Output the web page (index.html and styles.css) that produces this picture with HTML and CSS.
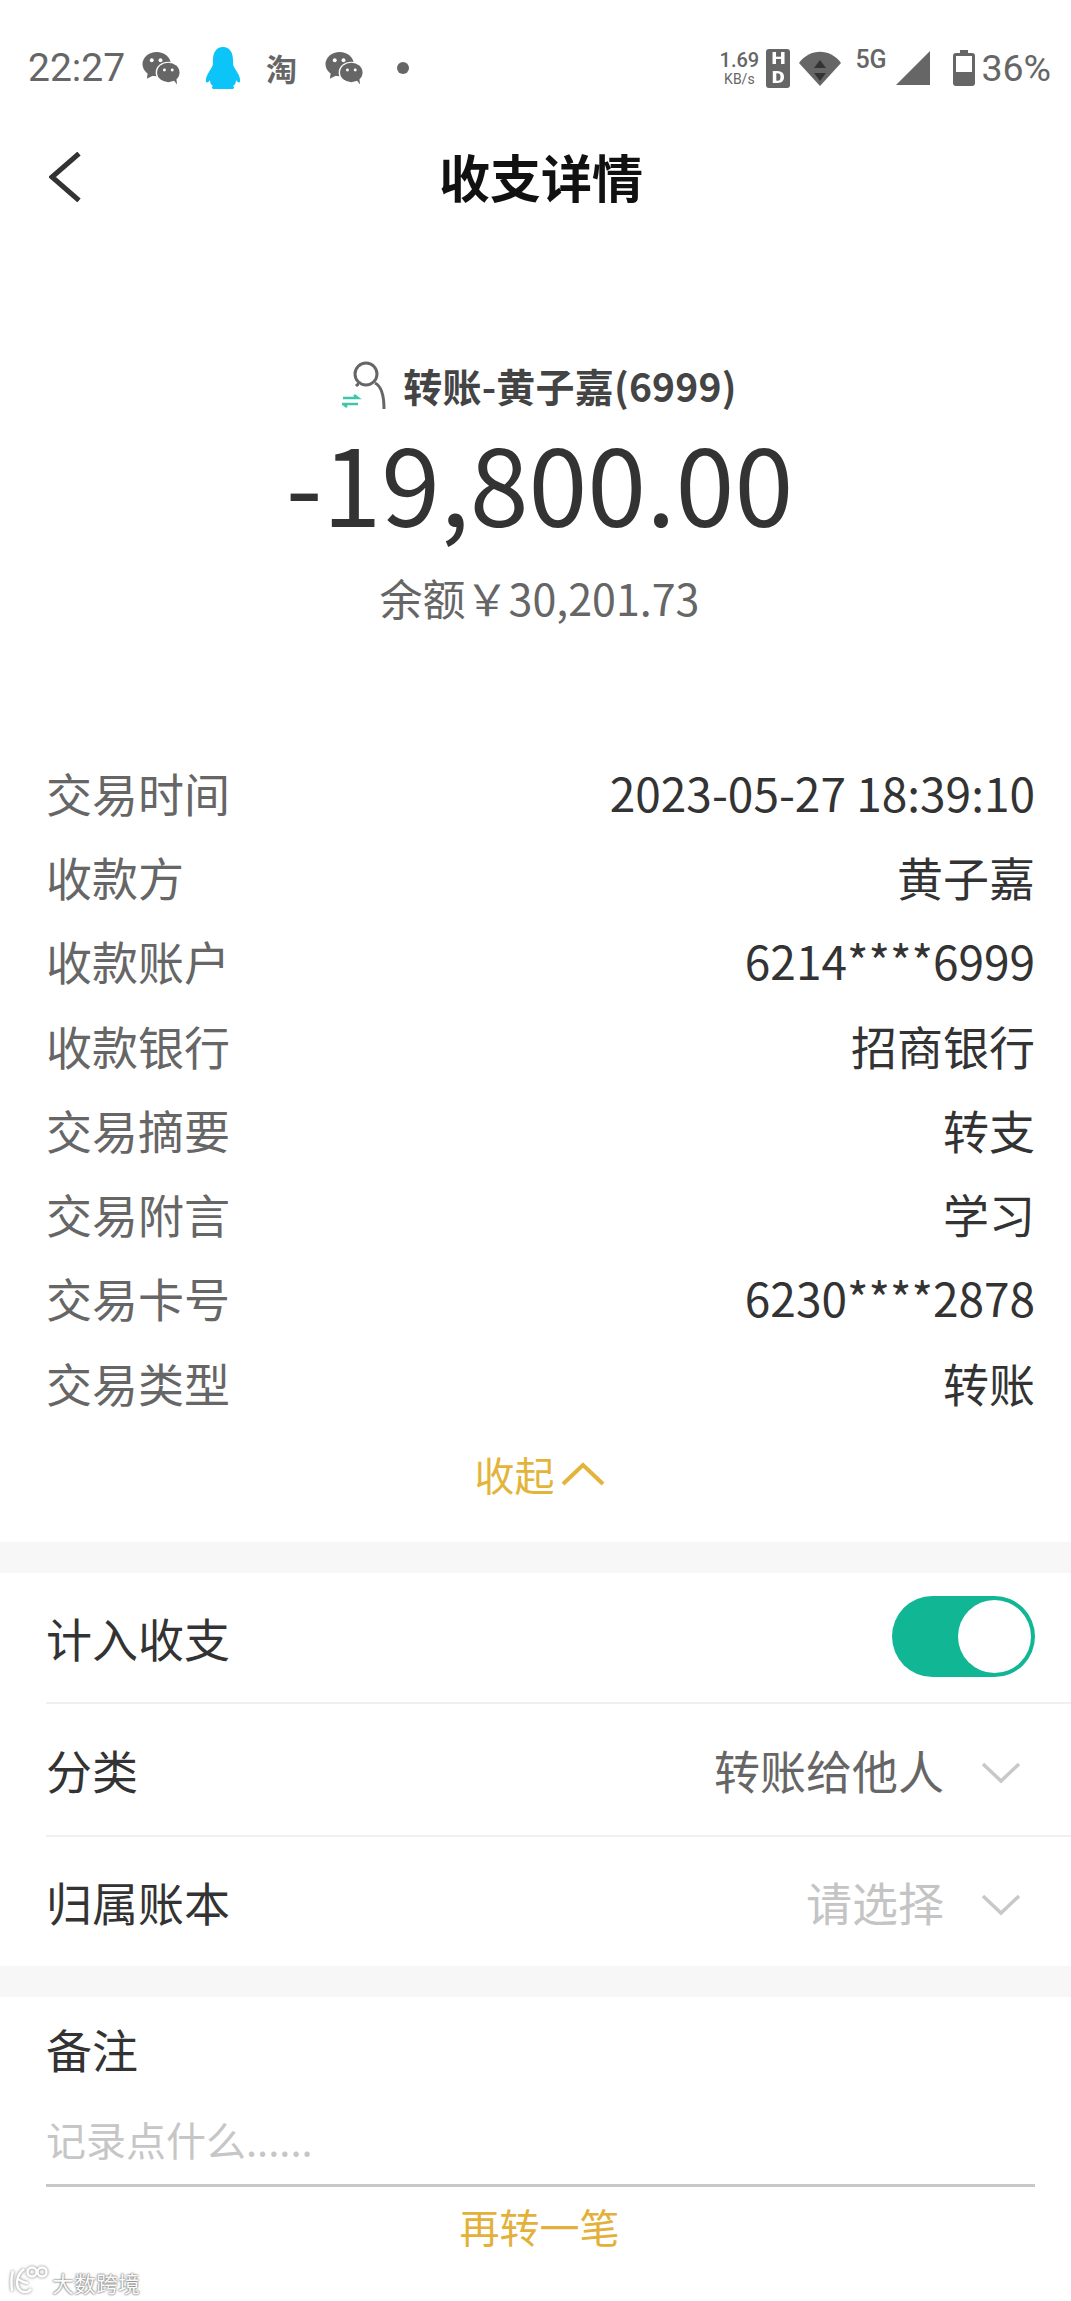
FILE: index.html
```html
<!DOCTYPE html>
<html lang="zh-CN">
<head>
<meta charset="utf-8">
<title>收支详情</title>
<link rel="stylesheet" href="styles.css">
</head>
<body>
<div class="page">
  <header class="status">
    <div class="status-left">
      <span class="clock">22:27</span>
      <svg class="ic-wechat" viewBox="0 0 40 34"><ellipse cx="15" cy="13" rx="14.5" ry="12.5" fill="#666"/><path d="M6 21l-1 7 8-4z" fill="#666"/><ellipse cx="27" cy="21.500" rx="13" ry="11" fill="#fff"/><ellipse cx="27" cy="21.500" rx="11.500" ry="10" fill="#666"/><path d="M32 29l4 5-1-8z" fill="#666"/><circle cx="10" cy="9" r="2" fill="#fff"/><circle cx="19" cy="9" r="2" fill="#fff"/><circle cx="23" cy="19" r="1.500" fill="#fff"/><circle cx="31" cy="19" r="1.500" fill="#fff"/></svg>
      <svg class="ic-qq" viewBox="0 0 36 42"><path d="M18 0c7 0 10 6 10 13 0 3 0 5 1 7 3 5 7 10 6 15-1 1-3 0-4-2 0 3-1 5-3 6 2 1 1 3-1 3H9c-2 0-3-2-1-3-2-1-3-3-3-6-1 2-3 3-4 2-1-5 3-10 6-15 1-2 1-4 1-7C8 6 11 0 18 0z" fill="#0cc4f7"/></svg>
      <span class="ic-tao">淘</span>
      <svg class="ic-wechat ic-wechat-2" viewBox="0 0 40 34"><ellipse cx="15" cy="13" rx="14.500" ry="12.500" fill="#666"/><path d="M6 21l-1 7 8-4z" fill="#666"/><ellipse cx="27" cy="21.500" rx="13" ry="11" fill="#fff"/><ellipse cx="27" cy="21.500" rx="11.500" ry="10" fill="#666"/><path d="M32 29l4 5-1-8z" fill="#666"/><circle cx="10" cy="9" r="2" fill="#fff"/><circle cx="19" cy="9" r="2" fill="#fff"/><circle cx="23" cy="19" r="1.500" fill="#fff"/><circle cx="31" cy="19" r="1.500" fill="#fff"/></svg>
      <span class="dot"></span>
    </div>
    <div class="status-right">
      <div class="speed"><span class="speed-num">1.69</span><span class="speed-unit">KB/s</span></div>
      <div class="hd"><span class="hd-letter">H</span><span class="hd-letter">D</span></div>
      <svg class="ic-wifi" viewBox="0 0 42 35"><path d="M0 12C11 -3 31 -3 42 12L21 35z" fill="#666"/><path d="M21 9l6 8H15zM21 30l-6-8h12z" fill="#333"/></svg>
      <span class="five-g">5G</span>
      <svg class="ic-signal" viewBox="0 0 34 34"><path d="M34 0v34H0z" fill="#666"/></svg>
      <svg class="ic-battery" viewBox="0 0 22 36"><path d="M7 0h8v3h4a3 3 0 0 1 3 3v27a3 3 0 0 1-3 3H3a3 3 0 0 1-3-3V6a3 3 0 0 1 3-3h4z" fill="#666"/><rect x="3" y="6" width="16" height="16" fill="#fff"/></svg>
      <span class="battery-pct">36%</span>
    </div>
  </header>

  <nav class="nav">
    <svg class="back" viewBox="0 0 32 50"><path d="M30 1.500L3 25l27 23.500" fill="none" stroke="#333" stroke-width="5"/></svg>
    <h1 class="title">收支详情</h1>
  </nav>

  <section class="summary">
    <div class="payee">
      <svg class="ic-payee" viewBox="0 0 44 50"><circle cx="24" cy="14" r="11" fill="none" stroke="#666" stroke-width="3"/><path d="M33 23c6 3 9 11 9 26" fill="none" stroke="#666" stroke-width="3"/><path d="M17 24c-1 0-2 1-3 2" fill="none" stroke="#666" stroke-width="3"/><path d="M1 38h15l-4-3M16 44H1l4 3" fill="none" stroke="#3cc7ab" stroke-width="2.500"/></svg>
      <span class="payee-name">转账-黄子嘉(6999)</span>
    </div>
    <div class="amount">-19,800.00</div>
    <div class="balance">余额￥30,201.73</div>
  </section>

  <dl class="details">
    <div class="detail"><dt>交易时间</dt><dd>2023-05-27 18:39:10</dd></div>
    <div class="detail"><dt>收款方</dt><dd>黄子嘉</dd></div>
    <div class="detail"><dt>收款账户</dt><dd>6214****6999</dd></div>
    <div class="detail"><dt>收款银行</dt><dd>招商银行</dd></div>
    <div class="detail"><dt>交易摘要</dt><dd>转支</dd></div>
    <div class="detail"><dt>交易附言</dt><dd>学习</dd></div>
    <div class="detail"><dt>交易卡号</dt><dd>6230****2878</dd></div>
    <div class="detail"><dt>交易类型</dt><dd>转账</dd></div>
  </dl>

  <div class="collapse">
    <span>收起</span>
    <svg class="ic-up" viewBox="0 0 44 24"><path d="M2 22L22 3l20 19" fill="none" stroke="#e3b43a" stroke-width="4"/></svg>
  </div>

  <div class="band"></div>

  <section class="settings">
    <div class="setting setting-toggle">
      <span class="setting-label">计入收支</span>
      <span class="toggle"><span class="knob"></span></span>
    </div>
    <div class="setting setting-mid">
      <span class="setting-label">分类</span>
      <span class="setting-value">转账给他人</span>
      <svg class="ic-down" viewBox="0 0 40 22"><path d="M2 2l18 17L38 2" fill="none" stroke="#c8c8c8" stroke-width="3.500"/></svg>
    </div>
    <div class="setting setting-last">
      <span class="setting-label">归属账本</span>
      <span class="setting-value is-empty">请选择</span>
      <svg class="ic-down" viewBox="0 0 40 22"><path d="M2 2l18 17L38 2" fill="none" stroke="#c8c8c8" stroke-width="3.500"/></svg>
    </div>
  </section>

  <div class="band"></div>

  <section class="note">
    <div class="note-label">备注</div>
    <div class="note-input">记录点什么......</div>
  </section>

  <div class="again">再转一笔</div>

  <div class="watermark">
    <svg class="wm-logo" viewBox="0 0 38 27"><path d="M3 5C1 11 1 17 2 25M14 3C6 9 5 21 11 25c4 2 8 1 10-2M8 13c3 2 7 4 10 4" fill="none" stroke="#fff" stroke-width="2.500"/><circle cx="22" cy="6" r="4.500" fill="none" stroke="#fff" stroke-width="2.500"/><circle cx="32" cy="6" r="4.500" fill="none" stroke="#fff" stroke-width="2.500"/></svg>
    <span class="wm-text">大数跨境</span>
  </div>
</div>
</body>
</html>
```

FILE: styles.css
```css
* { box-sizing: border-box; }
html, body { margin: 0; padding: 0; background: #fff; }
.page {
  position: relative;
  width: 1071px;
  height: 2301px;
  overflow: hidden;
  font-family: "Noto Sans CJK SC", "Noto Sans", sans-serif;
  color: #333;
}

/* status bar */
.status {
  height: 100px;
  padding: 36px 20px 0 28px;
  display: flex;
  justify-content: space-between;
  align-items: center;
  color: #666;
  font-family: Roboto, "Noto Sans CJK SC", sans-serif;
}
.status-left, .status-right { display: flex; align-items: center; }
.clock { font-size: 39px; line-height: 44px; width: 114px; }
.ic-wechat { width: 39px; height: 34px; }
.ic-qq { width: 36px; height: 42px; margin-left: 24px; }
.ic-tao {
  width: 32px;
  margin-left: 25px;
  font: 700 31px/34px "Noto Sans CJK SC", sans-serif;
}
.ic-wechat-2 { margin-left: 27px; }
.dot { width: 12px; height: 12px; margin-left: 33px; border-radius: 50%; background: #666; }
.speed { display: flex; flex-direction: column; align-items: center; width: 40px; margin-right: 7px; }
.speed-num { font-size: 20px; line-height: 22px; font-weight: 500; }
.speed-unit { font-size: 14px; line-height: 16px; }
.hd {
  width: 24px;
  height: 39px;
  border-radius: 3px;
  background: #666;
  color: #fff;
  display: flex;
  flex-direction: column;
  align-items: center;
  font-size: 16px;
  line-height: 19.500px;
  font-weight: 900;
}
.hd-letter { transform: scaleX(1.25); }
.ic-wifi { width: 42px; height: 35px; margin-left: 9px; }
.five-g { font-size: 25px; font-weight: 500; line-height: 24px; margin: -16px 0 0 14px; width: 33px; }
.ic-signal { width: 34px; height: 34px; margin-left: 8px; }
.ic-battery { width: 22px; height: 36px; margin-left: 23px; }
.battery-pct { font-size: 37.500px; line-height: 42px; margin-left: 6px; }

/* nav */
.nav { height: 154px; padding: 0 0 0 49px; display: flex; align-items: center; }
.back { width: 32px; height: 50px; }
.title {
  margin: -3px 0 0 358px;
  font-size: 51px;
  line-height: 60px;
  font-weight: 700;
  color: #111;
}

/* summary */
.summary { padding: 100px 0 0 8px; text-align: center; }
.payee { display: flex; align-items: center; justify-content: center; height: 62px; }
.ic-payee { width: 44px; height: 50px; margin-right: 17px; }
.payee-name { font-size: 39px; line-height: 62px; font-weight: 700; color: #444; letter-spacing: 0.2px; }
.amount { font-size: 106px; line-height: 130px; color: #333; }
.balance { font-size: 43px; line-height: 56px; margin-top: 23px; color: #666; }

/* details */
.details { margin: 124.500px 0 0; padding: 0 36px 0 46px; }
.detail {
  display: flex;
  justify-content: space-between;
  align-items: center;
  height: 84.300px;
  font-size: 46px;
}
.detail dt { color: #666; }
.detail dd { margin: 0; color: #333; }

.collapse {
  height: 118.500px;
  display: flex;
  align-items: center;
  justify-content: center;
  gap: 6px;
  padding: 0 0 18px 8px;
  font-size: 40px;
  color: #e3b43a;
}
.ic-up { width: 44px; height: 24px; }

.band { height: 31px; background: #f7f7f7; }

/* settings */
.setting {
  display: flex;
  align-items: center;
  height: 131px;
  margin-left: 46px;
  padding: 0 36px 2px 0;
  font-size: 46px;
  border-bottom: 2px solid #f0f0f0;
}
.setting-mid { height: 133px; }
.setting-last { height: 129px; border-bottom: 0; }
.setting-label { margin-right: auto; color: #333; }
.setting-value { color: #666; margin-right: 37px; }
.setting-value.is-empty { color: #c4c4c4; }
.ic-down { width: 40px; height: 22px; margin: 8px 14px 0 0; }
.toggle {
  width: 143px;
  height: 81px;
  border-radius: 41px;
  background: #11b795;
  display: flex;
  align-items: center;
  justify-content: flex-end;
  padding-right: 4px;
}
.knob { width: 73px; height: 73px; border-radius: 50%; background: #fff; }

/* note */
.note { margin: 0 36px 0 46px; }
.note-label { font-size: 46px; line-height: 60px; padding-top: 21px; color: #333; }
.note-input {
  margin-top: 32px;
  font-size: 40px;
  line-height: 58px;
  height: 77px;
  color: #c6c6c6;
  border-bottom: 3px solid #c8c8c8;
}

.again { margin-top: 13px; padding-left: 8px; text-align: center; font-size: 40px; line-height: 52px; color: #e3b03a; }

.watermark {
  position: absolute;
  left: 10px;
  bottom: 8px;
  display: flex;
  align-items: flex-end;
  gap: 4px;
}
.wm-logo { width: 38px; height: 27px; filter: drop-shadow(0 0 1.500px #777); }
.wm-text {
  font-size: 22px;
  line-height: 22px;
  color: #fafafa;
  text-shadow: 0 0 2px #666, 0 0 2px #888;
}
```
